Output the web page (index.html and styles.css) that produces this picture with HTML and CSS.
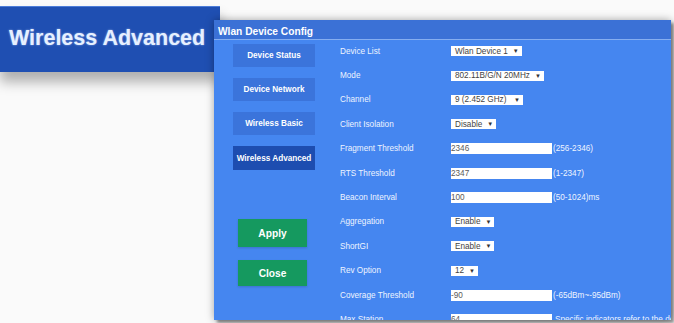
FILE: index.html
```html
<!DOCTYPE html>
<html lang="en">
<head>
  <meta charset="UTF-8">
  <meta name="viewport" content="width=device-width, initial-scale=1.0">
  <title>Wireless Advanced</title>
  <link rel="stylesheet" href="styles.css">
</head>
<body>
  <div class="stage">
    <div class="banner">Wireless Advanced</div>
    <div class="window">
      <div class="window-title">Wlan Device Config</div>
      <div class="window-body">
        <nav class="menu">
          <a class="menu-item">Device Status</a>
          <a class="menu-item">Device Network</a>
          <a class="menu-item">Wireless Basic</a>
          <a class="menu-item active">Wireless Advanced</a>
          <div class="actions">
            <button class="btn apply">Apply</button>
            <button class="btn close">Close</button>
          </div>
        </nav>
        <div class="form">
          <div class="row"><span class="label">Device List</span><span class="select">Wlan Device 1<i class="caret">&#9660;</i></span></div>
          <div class="row"><span class="label">Mode</span><span class="select">802.11B/G/N 20MHz<i class="caret">&#9660;</i></span></div>
          <div class="row"><span class="label">Channel</span><span class="select channel">9 (2.452 GHz)<i class="caret">&#9660;</i></span></div>
          <div class="row"><span class="label">Client Isolation</span><span class="select">Disable<i class="caret">&#9660;</i></span></div>
          <div class="row"><span class="label">Fragment Threshold</span><input class="field" type="text" value="2346"><span class="hint">(256-2346)</span></div>
          <div class="row"><span class="label">RTS Threshold</span><input class="field" type="text" value="2347"><span class="hint">(1-2347)</span></div>
          <div class="row"><span class="label">Beacon Interval</span><input class="field" type="text" value="100"><span class="hint">(50-1024)ms</span></div>
          <div class="row"><span class="label">Aggregation</span><span class="select">Enable<i class="caret">&#9660;</i></span></div>
          <div class="row"><span class="label">ShortGI</span><span class="select">Enable<i class="caret">&#9660;</i></span></div>
          <div class="row"><span class="label">Rev Option</span><span class="select">12<i class="caret">&#9660;</i></span></div>
          <div class="row"><span class="label">Coverage Threshold</span><input class="field" type="text" value="-90"><span class="hint">(-65dBm~-95dBm)</span></div>
          <div class="row"><span class="label">Max Station</span><input class="field" type="text" value="64"><span class="hint wide">Specific indicators refer to the device manual</span></div>
        </div>
      </div>
    </div>
  </div>
</body>
</html>
```

FILE: styles.css
```css
body {
  margin: 0;
  background: #fafafa;
  font-family: "Liberation Sans", Arial, sans-serif;
  overflow: hidden;
}
.stage {
  display: flex;
  align-items: flex-start;
  height: 323px;
}
.banner {
  flex: 0 0 220px;
  height: 66px;
  margin-top: 6px;
  box-sizing: border-box;
  padding-left: 9px;
  background: #1f4fb2;
  border-top: 1px solid #4c7cd8;
  color: #e6f0ff;
  font-size: 21.5px;
  font-weight: bold;
  line-height: 62px;
  white-space: nowrap;
  text-shadow: 0 0 2px rgba(200, 220, 255, 0.7);
  box-shadow: 0 10px 12px rgba(0, 0, 0, 0.3);
}
.window {
  position: relative;
  z-index: 1;
  flex: 0 0 457px;
  height: 300px;
  margin-left: -6px;
  margin-top: 20px;
  background: #4586f0;
  overflow: hidden;
  box-shadow: 0 0 8px rgba(0, 0, 0, 0.35), 3px 3px 3px rgba(0, 0, 0, 0.4);
}
.window-title {
  height: 19px;
  padding-left: 4px;
  background: #3b71d6;
  border-bottom: 1px solid #86aef0;
  color: #fff;
  font-size: 10.2px;
  font-weight: bold;
  line-height: 23px;
}
.window-body {
  display: flex;
}
.menu {
  flex: 0 0 126px;
  box-sizing: border-box;
  padding: 4px 0 0 19px;
  display: flex;
  flex-direction: column;
}
.menu-item {
  width: 82px;
  height: 23px;
  margin-bottom: 11px;
  display: flex;
  align-items: center;
  justify-content: center;
  background: #3b74db;
  color: #fff;
  font-size: 8.2px;
  font-weight: bold;
  white-space: nowrap;
}
.menu-item.active {
  background: #1d4db0;
  height: 24px;
}
.actions {
  margin-top: 38px;
  padding-left: 5px;
  display: flex;
  flex-direction: column;
}
.btn {
  width: 69px;
  height: 28px;
  border: 0;
  padding: 0;
  background: #15995f;
  color: #fff;
  font-family: "Liberation Sans", Arial, sans-serif;
  font-size: 10.2px;
  font-weight: bold;
  box-shadow: 0 1px 2px rgba(0, 0, 0, 0.15);
}
.btn.close {
  margin-top: 13px;
  height: 26px;
}
.form {
  flex: 1;
  margin-top: -1px;
  color: #eef4ff;
  font-size: 8.2px;
}
.row {
  height: 24.4px;
  display: flex;
  align-items: center;
  white-space: nowrap;
}
.label {
  flex: 0 0 111px;
}
.select {
  height: 10px;
  padding: 0 3px 0 4px;
  display: inline-flex;
  align-items: center;
  gap: 5px;
  background: #fff;
  color: #444;
}
.select.channel {
  width: 65px;
  justify-content: space-between;
}
.caret {
  font-size: 6px;
  font-style: normal;
  color: #333;
}
.field {
  width: 101px;
  height: 11px;
  box-sizing: border-box;
  border: 0;
  padding: 0;
  background: #fff;
  color: #5a5a5a;
  font-family: "Liberation Sans", Arial, sans-serif;
  font-size: 8.2px;
}
.hint {
  margin-left: 1px;
}
.hint.wide {
  margin-left: 3px;
}
```
